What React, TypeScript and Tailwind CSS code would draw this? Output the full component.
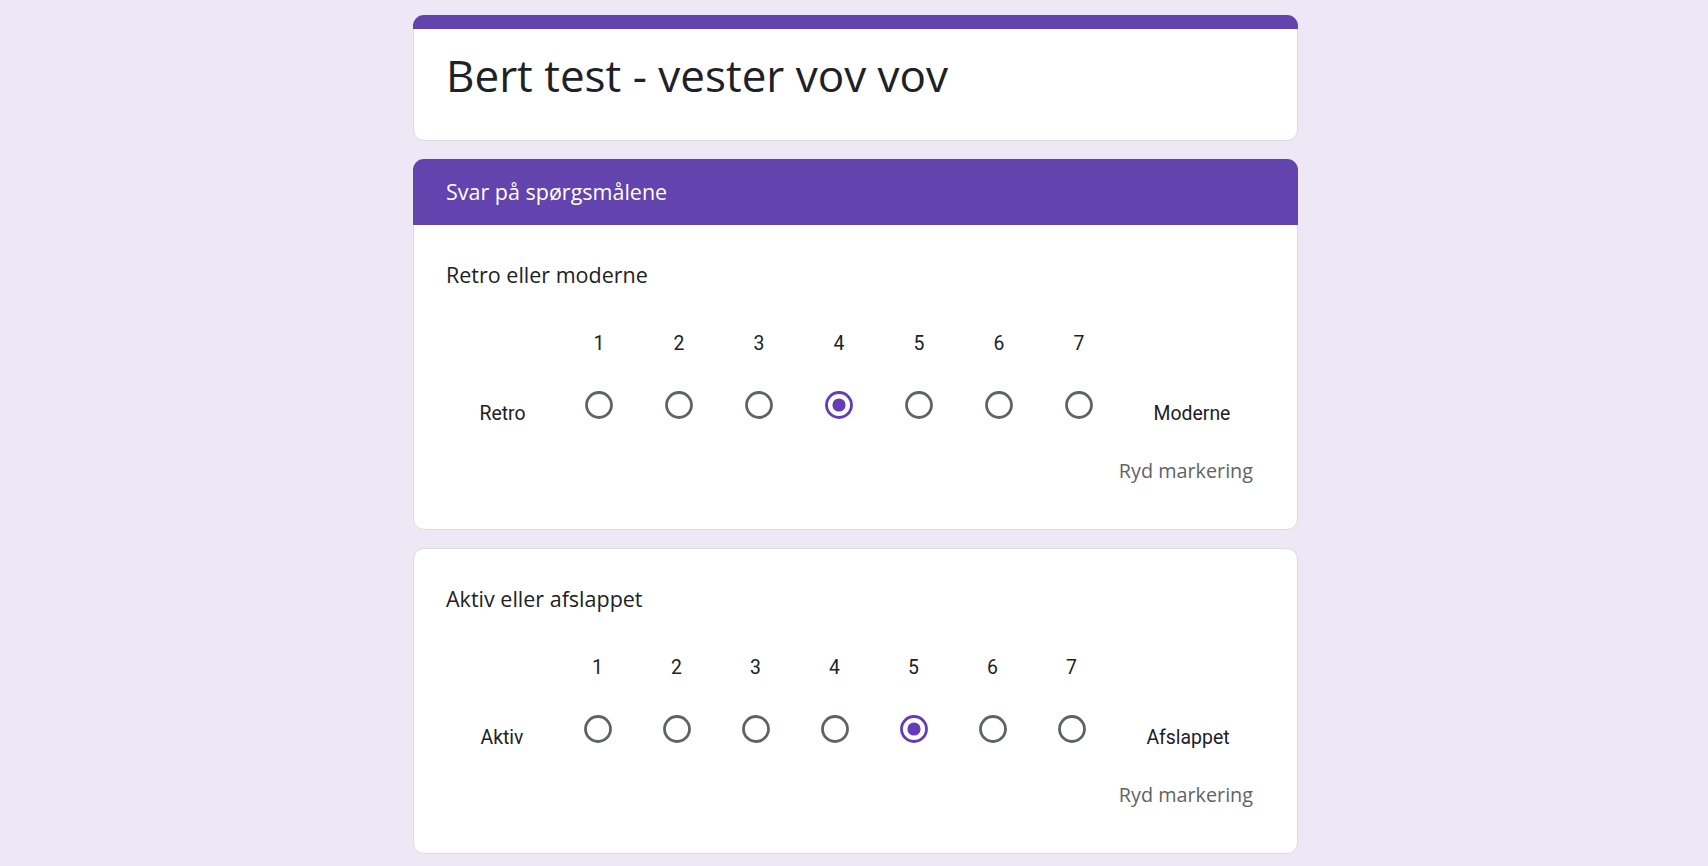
import { useState } from 'react'

type Scale = {
  title: string
  low: string
  high: string
  value: number
  leftW: string
  colW: string
}

const QUESTIONS: Scale[] = [
  { title: 'Retro eller moderne', low: 'Retro', high: 'Moderne', value: 4, leftW: 'w-[113px]', colW: 'w-[80px]' },
  { title: 'Aktiv eller afslappet', low: 'Aktiv', high: 'Afslappet', value: 5, leftW: 'w-[112px]', colW: 'w-[79px]' },
]

const sans = "font-['Open_Sans',sans-serif]"
const roboto = "font-['Roboto',sans-serif]"

function Radio({ checked, onClick }: { checked: boolean; onClick: () => void }) {
  return (
    <button type="button" onClick={onClick} className="flex h-[48px] w-[48px] items-center justify-center">
      <svg width="28" height="28" viewBox="0 0 28 28">
        <circle cx="14" cy="14" r="12.5" fill="none" stroke={checked ? '#673ab7' : '#5f6368'} strokeWidth="2.8" />
        {checked && <circle cx="14" cy="14" r="6.6" fill="#673ab7" />}
      </svg>
    </button>
  )
}

function ScaleQuestion({ q }: { q: Scale }) {
  const [value, setValue] = useState<number | null>(q.value)

  return (
    <div className="px-[32px] pb-[46px] pt-[35px]">
      <div className={`${sans} h-[30px] text-[21.5px] leading-[30px] text-[#202124]`}>{q.title}</div>

      <div className={`${roboto} mt-[40px] flex text-[19.4px] text-[#202124]`}>
        <div className={`${q.leftW} flex flex-col justify-end pb-[3px] text-center leading-[24px]`}>{q.low}</div>
        {[1, 2, 3, 4, 5, 6, 7].map((n) => (
          <div key={n} className={`${q.colW} flex flex-col items-center`}>
            <div className="h-[28px] leading-[28px]">{n}</div>
            <div className="mt-[23px]">
              <Radio checked={value === n} onClick={() => setValue(n)} />
            </div>
          </div>
        ))}
        <div className="flex flex-1 flex-col justify-end pb-[3px] text-center leading-[24px]">{q.high}</div>
      </div>

      <div className="mt-[30px] flex justify-end">
        <button
          type="button"
          onClick={() => setValue(null)}
          className={`${sans} mr-[12px] h-[24px] text-[19.8px] font-medium leading-[24px] text-[#5f6368]`}
        >
          Ryd markering
        </button>
      </div>
    </div>
  )
}

export default function App() {
  return (
    <div className="min-h-screen bg-[#ede7f6] pl-[3px] pt-[15px]">
      <div className="mx-auto flex w-[885px] flex-col gap-[18px]">
        <div className="rounded-[11px] border border-[#dadce0] bg-white">
          <div className="-mx-px -mt-px h-[14px] rounded-t-[11px] bg-[#6343ad]" />
          <div className={`${sans} px-[32px] pb-[38px] pt-[20px] text-[44px] leading-[53px] text-[#202124]`}>
            Bert test - vester vov vov
          </div>
        </div>

        <div className="rounded-[11px] border border-[#dadce0] bg-white">
          <div
            className={`${sans} -mx-px -mt-px flex h-[66px] items-center rounded-t-[11px] bg-[#6343ad] px-[33px] text-[21.5px] text-white`}
          >
            Svar på spørgsmålene
          </div>
          <ScaleQuestion q={QUESTIONS[0]} />
        </div>

        <div className="rounded-[11px] border border-[#dadce0] bg-white">
          <ScaleQuestion q={QUESTIONS[1]} />
        </div>
      </div>
    </div>
  )
}
